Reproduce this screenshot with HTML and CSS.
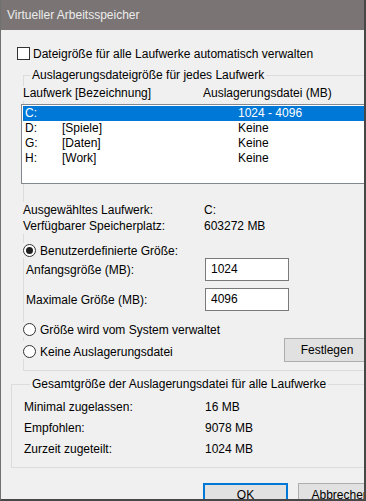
FILE: index.html
```html
<!DOCTYPE html>
<html lang="de">
<head>
    <meta charset="UTF-8">
    <title>Virtueller Arbeitsspeicher</title>
    <link rel="stylesheet" href="styles.css">
</head>
<body>
    <div class="window">
        <div class="titlebar">Virtueller Arbeitsspeicher</div>
        <div class="content">
            <div class="check-row">
                <span class="checkbox"></span>
                <span>Dateigröße für alle Laufwerke automatisch verwalten</span>
            </div>

            <fieldset class="group drives">
                <legend>Auslagerungsdateigröße für jedes Laufwerk</legend>
                <div class="list-head cover">
                    <span>Laufwerk [Bezeichnung]</span>
                    <span>Auslagerungsdatei (MB)</span>
                </div>
                <ul class="drive-list">
                    <li class="selected"><span>C:</span><span></span><span>1024 - 4096</span></li>
                    <li><span>D:</span><span>[Spiele]</span><span>Keine</span></li>
                    <li><span>G:</span><span>[Daten]</span><span>Keine</span></li>
                    <li><span>H:</span><span>[Work]</span><span>Keine</span></li>
                </ul>

                <div class="info cover">
                    <div class="info-row"><span>Ausgewähltes Laufwerk:</span><span>C:</span></div>
                    <div class="info-row"><span>Verfügbarer Speicherplatz:</span><span>603272 MB</span></div>
                </div>

                <div class="radio-row cover first-radio">
                    <span class="radio checked"></span>
                    <span>Benutzerdefinierte Größe:</span>
                </div>
                <div class="size-row">
                    <span class="size-label">Anfangsgröße (MB):</span>
                    <span class="textbox">1024</span>
                </div>
                <div class="size-row second">
                    <span class="size-label">Maximale Größe (MB):</span>
                    <span class="textbox">4096</span>
                </div>
                <div class="radio-row cover system-radio">
                    <span class="radio"></span>
                    <span>Größe wird vom System verwaltet</span>
                </div>
                <div class="set-row">
                    <div class="radio-row cover none-radio">
                        <span class="radio"></span>
                        <span>Keine Auslagerungsdatei</span>
                    </div>
                    <button class="btn set-btn">Festlegen</button>
                </div>
            </fieldset>

            <fieldset class="group totals">
                <legend>Gesamtgröße der Auslagerungsdatei für alle Laufwerke</legend>
                <div class="total-row"><span>Minimal zugelassen:</span><span>16 MB</span></div>
                <div class="total-row"><span>Empfohlen:</span><span>9078 MB</span></div>
                <div class="total-row"><span>Zurzeit zugeteilt:</span><span>1024 MB</span></div>
            </fieldset>

            <div class="buttons">
                <button class="btn default">OK</button>
                <button class="btn">Abbrechen</button>
            </div>
        </div>
    </div>
</body>
</html>
```
FILE: styles.css
```css
* {
    margin: 0;
    padding: 0;
    box-sizing: border-box;
}
body {
    font-family: "Liberation Sans", Arial, sans-serif;
    font-size: 12px;
    color: #000;
    background: #f0f0f0;
}

.window {
    width: 366px;
    height: 501px;
    overflow: hidden;
    background: #f0f0f0;
    border-left: 1px solid #707070;
    border-right: 2px solid #474747;
    border-bottom: 2px solid #474747;
}
.titlebar {
    height: 30px;
    line-height: 30px;
    padding-left: 6px;
    background: #7a7574;
    color: #ececec;
    white-space: nowrap;
}

.check-row {
    display: flex;
    align-items: center;
    gap: 3px;
    height: 15px;
    margin-top: 16px;
    padding-left: 16px;
    white-space: nowrap;
}
.checkbox {
    width: 13px;
    height: 13px;
    border: 1px solid #333;
    background: #fff;
}

.group {
    min-width: 0;
    border: 1px solid #dcdcdc;
    white-space: nowrap;
}
.group legend {
    margin-left: 6px;
    padding: 0 2px;
    line-height: 15px;
}
.drives {
    margin: 7px -40px 0 22px;
    padding: 0 0 8px 0;
}
.cover {
    margin-left: -1px;
    background: #f0f0f0;
}

.list-head {
    display: grid;
    grid-template-columns: 180px auto;
    line-height: 15px;
    margin-top: 3px;
}
.drive-list {
    list-style: none;
    height: 80px;
    margin: 3px 10px 0 -3px;
    padding: 1px 0 0 1px;
    border: 1px solid #828790;
    background: #fff;
}
.drive-list li {
    display: grid;
    grid-template-columns: 37px 176px auto;
    height: 15px;
    line-height: 15px;
    padding-left: 2px;
}
.drive-list li.selected {
    background: #0078d7;
    color: #fff;
}

.info {
    margin-top: 18px;
}
.info-row {
    display: grid;
    grid-template-columns: 181px auto;
    line-height: 16px;
}

.radio-row {
    display: flex;
    align-items: center;
    gap: 4px;
    height: 15px;
}
.radio {
    display: flex;
    align-items: center;
    justify-content: center;
    width: 13px;
    height: 13px;
    border: 1px solid #333;
    border-radius: 50%;
    background: #fff;
}
.radio.checked::after {
    content: "";
    width: 7px;
    height: 7px;
    border-radius: 50%;
    background: #1f1f1f;
}
.first-radio {
    margin-top: 9px;
}
.system-radio {
    margin-top: 11px;
}

.size-row {
    display: flex;
    align-items: center;
    margin-left: 2px;
}
.size-row.second {
    margin-top: 7px;
}
.size-label {
    width: 179px;
}
.textbox {
    width: 84px;
    height: 23px;
    line-height: 21px;
    padding-left: 5px;
    border: 1px solid #7a7a7a;
    background: #fff;
}

.set-row {
    display: flex;
    align-items: center;
    margin-top: 1px;
}
.none-radio {
    width: 261px;
    flex: none;
    padding-top: 3px;
    height: 18px;
}

.btn {
    flex: none;
    width: 85px;
    height: 24px;
    font-family: "Liberation Sans", Arial, sans-serif;
    font-size: 12px;
    color: #000;
    background: #e1e1e1;
    border: 1px solid #adadad;
}
.set-btn {
    width: 86px;
}
.btn.default {
    border: 2px solid #0078d7;
}

.totals {
    margin: 6px -40px 0 10px;
    padding: 7px 0 10px 12px;
    display: flex;
    flex-direction: column;
    gap: 5px;
}
.total-row {
    display: grid;
    grid-template-columns: 181px auto;
    line-height: 16px;
}

.buttons {
    display: flex;
    gap: 10px;
    margin-top: 15px;
    padding-left: 202px;
}
```
